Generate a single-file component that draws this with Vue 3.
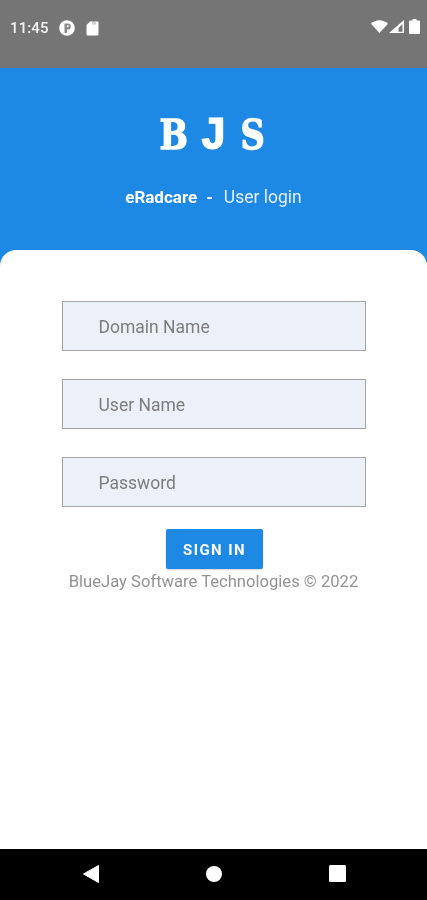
<script setup>
const fields = ['Domain Name', 'User Name', 'Password']
const letters = ['B', 'J', 'S']
</script>

<template>
  <div class="screen">
    <div class="status">
      <div class="status-left">
        <span class="time">11:45</span>
        <svg class="ic" width="16" height="16" viewBox="0 0 16 16"><circle cx="8" cy="8" r="7.800" fill="#fff"/><path d="M5.500 13V3.500H9a2.800 2.800 0 0 1 2.800 2.800v.4A2.800 2.800 0 0 1 9 9.500H8V13z" fill="#8a8a8a"/><circle cx="8.800" cy="6.300" r="1" fill="#fff"/></svg>
        <svg class="ic sd" width="13" height="15" viewBox="0 0 13 15"><path d="M4 .5h7.500a1 1 0 0 1 1 1v12a1 1 0 0 1-1 1h-10a1 1 0 0 1-1-1V4z" fill="#fff"/><path d="M6 1h4v2.500H6z" fill="#cfcfcf"/></svg>
      </div>
      <div class="status-right">
        <svg width="17" height="13" viewBox="0 0 17 13"><path d="M0 3.800C2.100 1.500 5.200.2 8.500.2s6.400 1.300 8.500 3.600L8.500 13z" fill="#fff"/></svg>
        <svg width="15" height="13" viewBox="0 0 15 13"><path fill-rule="evenodd" d="M15 0v13H0zM13.500 4 9.500 8v3.700h4z" fill="#fff"/></svg>
        <svg width="11" height="15" viewBox="0 0 11 15"><path d="M3.500 0h4v1.500H10a1 1 0 0 1 1 1V14a1 1 0 0 1-1 1H1a1 1 0 0 1-1-1V2.500a1 1 0 0 1 1-1h2.500z" fill="#fff"/></svg>
      </div>
    </div>

    <div class="main">
      <header class="hero">
        <div class="logo"><span v-for="l in letters" :key="l" class="letter" :class="'l-' + l">{{ l }}</span></div>
        <div class="sub"><b>eRadcare</b><b class="dash">-</b><span>User login</span></div>
      </header>

      <section class="card">
        <div class="form">
          <div v-for="f in fields" :key="f" class="field">{{ f }}</div>
        </div>
        <button class="btn" type="button">SIGN IN</button>
        <p class="copy">BlueJay Software Technologies © 2022</p>
      </section>
    </div>

    <nav class="nav">
      <svg width="18" height="20" viewBox="0 0 18 20"><path d="M1.500 10 16.500 1.500v17z" fill="#fff" stroke="#fff" stroke-linejoin="round"/></svg>
      <span class="dot"></span>
      <span class="square"></span>
    </nav>
  </div>
</template>

<style>
html, body { margin: 0; background: #fff; }
</style>

<style scoped>
.screen {
  width: 427px;
  height: 900px;
  display: flex;
  flex-direction: column;
  overflow: hidden;
  font-family: Roboto, "Liberation Sans", sans-serif;
  filter: blur(0.55px);
}
.status {
  height: 68px;
  flex: none;
  box-sizing: border-box;
  background: #757575;
  display: flex;
  justify-content: space-between;
  align-items: flex-start;
  padding: 19px 7px 0 10px;
  color: #fff;
}
.status-left, .status-right { display: flex; align-items: center; }
.status-left { gap: 10px; }
.status-right { gap: 1px; }
.status-right svg:last-child { margin-left: 4px; }
.time { font-size: 15px; line-height: 18px; font-weight: 500; letter-spacing: 0.1px; color: #f2f2f2; }
.ic { display: block; }
.sd { margin-left: 1px; }
.main {
  flex: 1;
  background: #1e88e5;
  display: flex;
  flex-direction: column;
  min-height: 0;
}
.hero {
  height: 182px;
  flex: none;
  box-sizing: border-box;
  padding-top: 42px;
  color: #fff;
  text-align: center;
}
.logo {
  font-family: "DejaVu Serif", serif;
  font-weight: 700;
  font-size: 41px;
  line-height: 50px;
  display: flex;
  justify-content: center;
  -webkit-text-stroke: 1.300px #fff;
}
.letter { width: 39.500px; text-align: center; display: block; transform: scaleX(0.82); }
.l-J {
  font-family: "Liberation Mono", monospace;
  font-size: 46px;
  transform: translateY(2px);
  -webkit-text-stroke: 1px #fff;
}
.sub {
  margin-top: 25px;
  font-size: 17.500px;
  line-height: 24px;
  display: flex;
  justify-content: center;
  color: #e3f0fc;
}
.sub b { font-weight: 700; color: #fff; font-size: 17px; }
.sub .dash { margin: 0 11px 0 9px; }
.card {
  flex: 1;
  background: #fff;
  border-radius: 16px 16px 0 0;
  display: flex;
  flex-direction: column;
  align-items: center;
  padding-top: 51px;
}
.form {
  display: flex;
  flex-direction: column;
  gap: 28px;
}
.field {
  width: 304px;
  height: 50px;
  box-sizing: border-box;
  background: #ecf0f8;
  border: 1.500px solid #a3a3a3;
  padding-left: 36px;
  font-size: 17.500px;
  line-height: 51px;
  color: #7d7d7d;
}
.btn {
  margin: 22px 0 0 1px;
  width: 97px;
  height: 40px;
  border: 0;
  border-radius: 2px;
  background: #1e88e5;
  color: #fff;
  font-family: inherit;
  font-size: 15px;
  font-weight: 700;
  letter-spacing: 1.400px;
  padding: 1px 0 0 1px;
  box-shadow: 0 1px 2px rgba(0,0,0,.18);
}
.copy {
  margin: 3px 0 0;
  font-size: 16.600px;
  line-height: 20px;
  color: #939393;
  white-space: nowrap;
}
.nav {
  height: 51px;
  flex: none;
  background: #000;
  display: grid;
  grid-template-columns: repeat(3, 123px);
  justify-content: center;
  justify-items: center;
  align-items: center;
  padding: 0 0 2px 1px;
  box-sizing: border-box;
}
.dot { width: 16px; height: 16px; border-radius: 50%; background: #fff; }
.square { width: 17px; height: 17px; border-radius: 1.500px; background: #fff; }
</style>
